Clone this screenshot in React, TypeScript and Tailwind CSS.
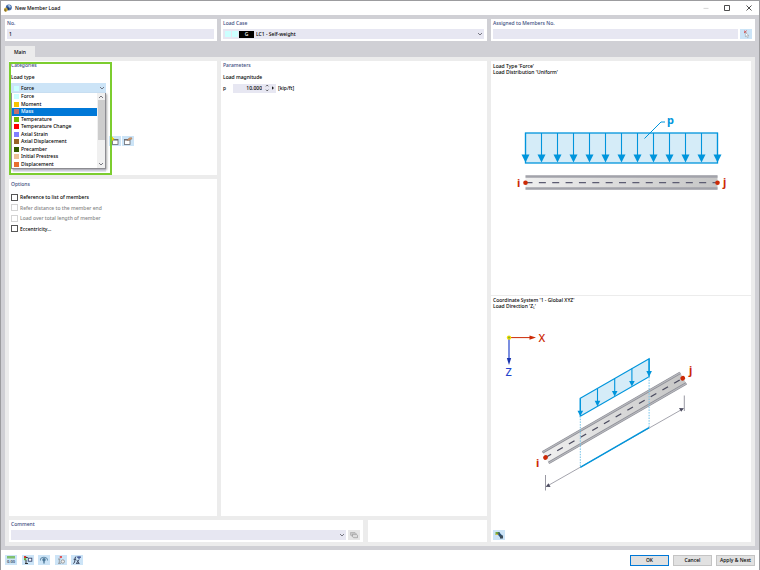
import { useState, type ReactNode } from 'react';

const LOAD_TYPES = [
  { name: 'Force', swatch: 'bg-[#ccffff]' },
  { name: 'Moment', swatch: 'bg-[#f8c300]' },
  { name: 'Mass', swatch: 'bg-[#c07070]' },
  { name: 'Temperature', swatch: 'bg-[#73b900]' },
  { name: 'Temperature Change', swatch: 'bg-[#ff0000]' },
  { name: 'Axial Strain', swatch: 'bg-[#8080ff]' },
  { name: 'Axial Displacement', swatch: 'bg-[#996528]' },
  { name: 'Precamber', swatch: 'bg-[#335a00]' },
  { name: 'Initial Prestress', swatch: 'bg-[#ecc199]' },
  { name: 'Displacement', swatch: 'bg-[#e87030]' },
];

const OPTIONS = [
  { id: 'ref-list', label: 'Reference to list of members', disabled: false },
  { id: 'ref-end', label: 'Refer distance to the member end', disabled: true },
  { id: 'total-length', label: 'Load over total length of member', disabled: true },
  { id: 'eccentricity', label: 'Eccentricity...', disabled: false },
];

const BLUE = '#0095dc';
const RED = '#cc2a06';

function Chevron({ up = false }: { up?: boolean }) {
  return (
    <svg viewBox="0 0 6 4" className="pointer-events-none h-1 w-1.5 shrink-0" fill="none" stroke="#5c5c66" strokeWidth="0.8">
      <path d={up ? 'M1 3 3 1l2 2' : 'M1 1l2 2 2-2'} />
    </svg>
  );
}

function Card({ title, htmlFor, className = '', children }: {
  title?: string;
  htmlFor?: string;
  className?: string;
  children?: ReactNode;
}) {
  return (
    <section className={`bg-white pr-[3px] pl-[2px] ${className}`}>
      {title && htmlFor ? (
        <label htmlFor={htmlFor} className="block h-2 leading-[8px] text-[#3c4c80]">{title}</label>
      ) : null}
      {title && !htmlFor ? <h2 className="h-2 leading-[8px] text-[#3c4c80]">{title}</h2> : null}
      {children}
    </section>
  );
}

function ToolButton({ label, className = 'bg-[#cce4f7]', children }: {
  label: string;
  className?: string;
  children: ReactNode;
}) {
  return (
    <button type="button" aria-label={label} className={`flex h-[10px] w-3 shrink-0 items-center justify-center ${className}`}>
      <svg viewBox="0 0 12 10" className="h-[10px] w-3" fill="none">{children}</svg>
    </button>
  );
}

function TitleBar() {
  return (
    <header className="flex h-[14px] shrink-0 items-center bg-white pl-[3px]">
      <svg viewBox="0 0 8 8" className="mr-[3px] h-2 w-2">
        <circle cx="4.8" cy="3.4" r="3" fill="#3e68a8" />
        <path d="M3.5 1.2 6 1l1.2 2.2-1.8.6z" fill="#a9c3e2" />
        <path d="M3 3.2 5.2 4 5 6 3.4 5.4z" fill="#1c355f" />
        <path d="M.3 4.6 2 3.6l1.6 1.2v2L2 7.8.3 6.9z" fill="#c9a636" />
        <path d="M.3 4.6 2 5.4v2.4L.3 6.9z" fill="#8a742a" />
      </svg>
      <h1 className="flex-1 leading-[8px]">New Member Load</h1>
      <button type="button" aria-label="Minimize" className="flex h-3 w-[21px] items-center justify-center">
        <svg viewBox="0 0 6 6" className="h-1.5 w-1.5" stroke="#c4c4c4" strokeWidth="0.7"><path d="M.5 3.4h5" /></svg>
      </button>
      <button type="button" aria-label="Maximize" className="flex h-3 w-[22px] items-center justify-center">
        <svg viewBox="0 0 6 6" className="h-1.5 w-1.5" fill="none" stroke="#222" strokeWidth="0.8"><rect x=".6" y=".6" width="4.8" height="4.8" /></svg>
      </button>
      <button type="button" aria-label="Close" className="flex h-3 w-[21px] items-center justify-center">
        <svg viewBox="0 0 6 6" className="h-1.5 w-1.5" stroke="#222" strokeWidth="0.8"><path d="M.5.5l5 5M5.5.5l-5 5" /></svg>
      </button>
    </header>
  );
}

function HeaderRow() {
  return (
    <div className="grid grid-cols-[212fr_266fr_264fr] gap-1">
      <Card title="No." htmlFor="load-no" className="h-[22px]">
        <input id="load-no" defaultValue="1" className="mt-[2px] block h-[10px] w-full bg-[#e7e7f2] px-[2px]" />
      </Card>
      <Card title="Load Case" htmlFor="load-case" className="h-[22px]">
        <div className="mt-[2px] flex h-[10px] items-center bg-[#e7e7f2] pr-px pl-[2px]">
          <span className="h-1.5 w-1.5 bg-[#ccffff]" />
          <span className="ml-px h-1.5 w-1.5 bg-[#ccffff]" />
          <span className="ml-px h-[7px] w-[15px] bg-black text-center leading-[7px] text-white">G</span>
          <select id="load-case" className="ml-[2px] h-full min-w-0 flex-1 appearance-none leading-[10px]">
            <option>LC1 - Self-weight</option>
          </select>
          <Chevron />
        </div>
      </Card>
      <Card title="Assigned to Members No." htmlFor="members" className="h-[22px]">
        <div className="mt-[2px] flex gap-[2px]">
          <input id="members" className="block h-[10px] min-w-0 flex-1 bg-[#e7e7f2] px-[2px]" />
          <ToolButton label="Select members">
            <path d="M4 1.7l2.600 2.400M6.600 1.700 4 4.100" stroke="#d65050" strokeWidth="1" />
            <path d="M5.400 3.400v4.400l1.200-1 .8 1.900.9-.4-.8-1.800h1.300z" fill="#fff" stroke="#8d9299" strokeWidth="0.5" />
          </ToolButton>
        </div>
      </Card>
    </div>
  );
}

function LoadTypeList({ selected, onSelect }: { selected: string; onSelect: (name: string) => void }) {
  return (
    <div className="absolute inset-x-0 top-full z-10 flex h-[76px] border border-t-0 border-[#8d8d92] bg-white shadow-[1px_1px_2px_#0005]">
      <ul role="listbox" aria-label="Load types" className="grid flex-1 auto-rows-fr">
        {LOAD_TYPES.map((type) => (
          <li
            key={type.name}
            role="option"
            aria-selected={type.name === selected}
            onClick={() => onSelect(type.name)}
            className={`flex items-center pl-[2px] leading-[7px] ${type.name === selected ? 'bg-[#0078d7] text-white' : ''}`}
          >
            <span className={`mr-[2px] h-[5px] w-[5px] ${type.swatch}`} />
            {type.name}
          </li>
        ))}
      </ul>
      <div className="flex w-2 flex-col items-center justify-between bg-[#f0f0f0] py-[2px]">
        <Chevron up />
        <div className="mt-px h-10 w-[7px] bg-[#cdcdcd]" />
        <div className="flex-1" />
        <Chevron />
      </div>
    </div>
  );
}

function Categories() {
  const [highlighted, setHighlighted] = useState('Mass');

  return (
    <Card title="Categories" className="relative h-[114px]">
      <label htmlFor="load-type" className="mt-1 block leading-[8px]">Load type</label>
      <div className="relative mt-[2px] flex h-[10px] w-[95px] items-center bg-[#cce4f7] pr-px pl-[3px]">
        <span className="h-[5px] w-[5px] bg-[#ccffff]" />
        <select id="load-type" className="ml-[2px] h-full min-w-0 flex-1 appearance-none leading-[10px]">
          <option>Force</option>
        </select>
        <Chevron />
        <LoadTypeList selected={highlighted} onSelect={setHighlighted} />
      </div>
      <div className="mt-[43px] ml-[98px] flex gap-px">
        <ToolButton label="New load distribution">
          <rect x="3.5" y="3.5" width="5.5" height="5" fill="#fff" stroke="#67686e" strokeWidth="0.8" />
          <path d="M3.5 3.9H9" stroke="#67686e" strokeWidth="1.2" />
          <path d="M3.2.8v4M1.2 2.8h4" stroke="#f2d500" strokeWidth="1.5" />
        </ToolButton>
        <ToolButton label="Edit load distribution">
          <rect x="2.5" y="3.5" width="5.5" height="5" fill="#fff" stroke="#67686e" strokeWidth="0.8" />
          <path d="M2.5 3.9H8" stroke="#67686e" strokeWidth="1.2" />
          <path d="M5 4.5 7 2l2.5-.4.4 1.5L7.5 4z" fill="#d99a6c" stroke="#8c644a" strokeWidth="0.4" />
        </ToolButton>
      </div>
      <div className="mt-[16px] ml-[2px] h-[10px] w-[93px] bg-[#e7e7f2]" />
      <div className="pointer-events-none absolute top-px bottom-0 left-0 z-20 w-[103px] border-2 border-[#7ccd2f]" />
    </Card>
  );
}

function Options() {
  return (
    <Card title="Options" className="flex-1 pt-px">
      <div className="mt-1 flex flex-col">
        {OPTIONS.map((option) => (
          <div key={option.id} className="flex h-[10px] items-center gap-[2px] even:h-[11px]">
            <input
              id={option.id}
              type="checkbox"
              disabled={option.disabled}
              className="h-[7px] w-[7px] appearance-none border border-[#555] bg-white checked:bg-[#0078d7] disabled:border-[#d4d4d4]"
            />
            <label htmlFor={option.id} className={option.disabled ? 'text-[#858585]' : ''}>{option.label}</label>
          </div>
        ))}
      </div>
    </Card>
  );
}

function Parameters() {
  return (
    <Card title="Parameters">
      <h3 className="mt-1 leading-[8px]">Load magnitude</h3>
      <div className="mt-[2px] flex h-[10px] items-center">
        <label htmlFor="magnitude" className="w-[10px]">p</label>
        <div className="flex h-[9px] w-[43px] items-center bg-[#e7e7f2]">
          <input id="magnitude" defaultValue="10.000" className="h-full w-[29px] min-w-0 bg-transparent text-right" />
          <svg viewBox="0 0 14 8" className="h-2 w-[14px]" fill="none" stroke="#333" strokeWidth="0.8">
            <path d="M4 2.3 5.2 1.1 6.4 2.3M4 5.7l1.2 1.2L6.4 5.7" />
            <path d="M10 2.2 12 4l-2 1.8z" fill="#222" stroke="none" />
          </svg>
        </div>
        <span className="ml-[2px]">[kip/ft]</span>
      </div>
    </Card>
  );
}

function DownArrow({ x, top, bottom, size = 4 }: { x: number; top: number; bottom: number; size?: number }) {
  return (
    <g>
      <path d={`M${x} ${top}V${bottom - size}`} stroke={BLUE} strokeWidth="1.1" />
      <path d={`M${x - size} ${bottom - size * 2}h${size * 2}L${x} ${bottom}z`} fill={BLUE} />
    </g>
  );
}

function UniformLoadDiagram() {
  const arrows = Array.from({ length: 13 }, (_, i) => 34.5 + i * 16);

  return (
    <svg viewBox="0 0 260 218" className="block w-full" role="img" aria-label="Uniform load on a member">
      <defs>
        <linearGradient id="beam" x1="0" x2="1">
          <stop offset="0" stopColor="#efefef" />
          <stop offset="1" stopColor="#c6c6c6" />
        </linearGradient>
      </defs>
      <rect x="34.5" y="56" width="192" height="30" fill="#d5ecf8" stroke={BLUE} strokeWidth="1.3" />
      {arrows.map((x) => <DownArrow key={x} x={x} top={56} bottom={85.5} />)}
      <path d="M153.5 61.5 170 45h4" fill="none" stroke={BLUE} />
      <text x="176" y="47" fontSize="11" fontWeight="700" fill={BLUE}>p</text>
      <rect x="34.5" y="98.5" width="192" height="14" fill="url(#beam)" />
      <path d="M34.5 99.5h192M34.5 111.5h192" stroke="#a2a3aa" strokeWidth="2.4" />
      <path d="M34.5 105.7h192" stroke="#5c5c72" strokeWidth="1.3" strokeDasharray="7 6.36" />
      <circle cx="34.5" cy="105.7" r="2.3" fill={RED} />
      <circle cx="226.5" cy="105.7" r="2.3" fill={RED} />
      <text x="26" y="110" fontSize="11" fontWeight="700" fill={RED}>i</text>
      <text x="232" y="109" fontSize="11" fontWeight="700" fill={RED}>j</text>
    </svg>
  );
}

function DirectionDiagram() {
  const arrows = Array.from({ length: 5 }, (_, i) => ({ x: 89.3 + i * 17.2, y: 86.3 - i * 9.9 }));

  return (
    <svg viewBox="0 0 260 216" className="block w-full" role="img" aria-label="Load direction in global axes">
      {/* global axes */}
      <path d="M18 25.600h22" stroke={RED} />
      <path d="M38.5 23.400 45 25.600l-6.500 2.200z" fill={RED} />
      <path d="M18 26v22" stroke="#2344cc" strokeWidth="1.2" />
      <path d="M15.800 46h4.400L18 53z" fill="#1a35b0" />
      <circle cx="18" cy="25.600" r="2.2" fill="#f5dc00" />
      <circle cx="18" cy="25.600" r="1" fill="#7bb52a" />
      <text x="47.5" y="30" fontSize="11" fill={RED}>X</text>
      <text x="14.5" y="64" fontSize="11" fill="#2344cc">Z</text>

      {/* inclined beam */}
      <g transform="translate(54.500 145.500) rotate(-30)">
        <rect x="0" y="-6.500" width="159" height="13" fill="url(#beam)" />
        <path d="M0-6h159M0 6.300h159" stroke="#8f9098" strokeWidth="2.6" />
        <path d="M0-6h159M0 6.300h159" stroke="#b9babf" strokeWidth="1" />
        <path d="M0 0h159" stroke="#4c4c60" strokeWidth="1.4" strokeDasharray="6.5 7" />
        <circle cx="0" cy="0" r="2.4" fill={RED} />
        <circle cx="158.500" cy="0" r="2.4" fill={RED} />
      </g>
      <text x="45" y="155" fontSize="11" fontWeight="700" fill={RED}>i</text>
      <text x="198" y="62" fontSize="11" fontWeight="700" fill={RED}>j</text>

      {/* load block with its projection */}
      <path d="M89.300 86.300 158.100 46.700v18L89.300 104.300z" fill="#d5ecf8" stroke={BLUE} strokeWidth="1.2" />
      {arrows.map((a) => <DownArrow key={a.x} x={a.x} top={a.y} bottom={a.y + 18} size={2.8} />)}
      <path d="M89.300 104v51M158.100 65v50.500" stroke="#72c1e8" strokeDasharray="1.5 1.2" />
      <path d="M54.500 175 192.500 96.500" stroke="#8d8d98" strokeWidth="0.8" />
      <path d="M54.500 163v15.500M193.300 83.500v15.500" stroke="#8d8d98" strokeWidth="0.9" />
      <path d="M54.800 174.800l2.600-3.500 2.200 3.700zM192.800 96.300l-2.600 3.500-2.200-3.700z" fill="#4c4c60" />
      <path d="M89.300 155.300 158.100 115.700" stroke={BLUE} strokeWidth="1.5" />
    </svg>
  );
}

function Preview() {
  return (
    <section className="flex flex-col bg-white">
      <div className="border-b border-[#ececec]">
        <p className="h-4 pt-[2px] pl-[2px] leading-[6px]">Load Type 'Force'<br />Load Distribution 'Uniform'</p>
        <UniformLoadDiagram />
      </div>
      <p className="h-4 pt-px pl-[2px] leading-[6px]">
        Coordinate System '1 - Global XYZ'<br />Load Direction 'Z<sub className="text-[3px] leading-none">L</sub>'
      </p>
      <DirectionDiagram />
      <div className="mt-auto pb-[2px] pl-[2px]">
        <ToolButton label="Change view">
          <path d="M2.500 2h4.200v3H2.500z" fill="#72ad3c" />
          <path d="M4 3.500 6 2l4 4.500-2 2z" fill="#26517a" />
          <path d="M7 5.500h3v3H7z" fill="#3f4c58" />
          <path d="M3 4.500 5.500 4" stroke="#e9c73a" />
        </ToolButton>
      </div>
    </section>
  );
}

function CommentRow() {
  return (
    <div className="grid h-[22px] grid-cols-[354fr_119fr] gap-[5px]">
      <Card title="Comment" htmlFor="comment">
        <div className="mt-[2px] flex gap-[2px]">
          <div className="flex h-[10px] flex-1 items-center bg-[#e7e7f2] pr-px">
            <select id="comment" className="h-full min-w-0 flex-1 appearance-none leading-[10px]">
              <option />
            </select>
            <Chevron />
          </div>
          <ToolButton label="Comment library" className="bg-[#e6e6e6]">
            <path d="M2.500 2.500h4.500l1 1v2.500H3.500l-1-1z" fill="#c9c9c9" stroke="#a4a4a4" strokeWidth="0.6" />
            <path d="M4.500 4.300h4l1 1v2.400H5.500l-1-1z" fill="#ddd" stroke="#8f8f8f" strokeWidth="0.6" />
          </ToolButton>
        </div>
      </Card>
      <Card />
    </div>
  );
}

function Footer() {
  const button = 'h-[11px] w-[39px] bg-[#e1e1e1] leading-[9px] border';

  return (
    <footer className="flex h-5 shrink-0 items-center justify-between bg-white px-1">
      <div className="flex w-[78px] justify-between">
        <ToolButton label="Units and decimal places">
          <rect x="2" y="1" width="8" height="2.5" fill="#7fc070" />
          <text x="2" y="8.300" fontSize="4" fontWeight="600" fill="#33475c">0.00</text>
        </ToolButton>
        <ToolButton label="Display properties">
          <rect x="2" y="1" width="2.2" height="2.2" fill="#d93a2b" />
          <rect x="2" y="3.200" width="2.2" height="2" fill="#58b030" />
          <path d="M3.800 2.500h2M4 5v3.500M3 8.500h3" stroke="#222" strokeWidth="0.9" />
          <rect x="6.300" y="3.200" width="3.500" height="3" fill="#fff" stroke="#35446d" strokeWidth="0.9" />
        </ToolButton>
        <ToolButton label="Visibility">
          <path d="M2.500 5.500C1.500 1.200 10 1.200 9.500 5.500" stroke="#6790ae" strokeWidth="1.1" />
          <circle cx="6" cy="4.700" r="1.700" fill="#4c7898" />
          <path d="M6 5v3.500" stroke="#4c7898" strokeWidth="1.3" />
        </ToolButton>
        <ToolButton label="Delete load">
          <path d="M4.800 1l2 2M6.800 1l-2 2" stroke="#e03838" strokeWidth="1" />
          <path d="M3 4h2.500M3 8.300h3M4.300 4v4.300" stroke="#8a8a8a" strokeWidth="0.8" />
          <circle cx="7.800" cy="6.500" r="1.700" fill="#eee" stroke="#8a8a8a" strokeWidth="0.8" />
        </ToolButton>
        <ToolButton label="Formula editor">
          <path d="M5.300 1.700C3.800 1.500 4.200 4 3.800 6 3.500 8 3 8.500 2 8.300M2.600 4.300h2.600" stroke="#2b3550" strokeWidth="0.9" />
          <path d="M5.500 8.300 8 4.700M5.800 5l2.200 3.300M5 8.400h3.500" stroke="#2b3550" strokeWidth="0.8" />
          <path d="M6 2.200h4M8 1.300v3" stroke="#3a4f8f" strokeWidth="1.2" />
        </ToolButton>
      </div>
      <div className="flex gap-1">
        <button type="button" className={`${button} border-[#0078d7]`}>OK</button>
        <button type="button" className={`${button} border-[#c4c4c4]`}>Cancel</button>
        <button type="button" className={`${button} border-[#c4c4c4] whitespace-nowrap`}>Apply &amp; Next</button>
      </div>
    </footer>
  );
}

export default function App() {
  return (
    <div className="flex min-h-screen flex-col border-x border-t border-[#9c9c9f] bg-white font-['Noto_Sans','Open_Sans',sans-serif] text-[5px] leading-[8px] font-medium text-black">
      <TitleBar />
      <main className="flex flex-1 flex-col bg-[#d0d0d5] p-1">
        <HeaderRow />
        <div role="tablist" className="mt-[5px] flex">
          <button type="button" role="tab" aria-selected="true" className="h-[11px] w-[30px] bg-[#ececec]">Main</button>
        </div>
        <div className="grid flex-1 grid-cols-[478fr_260fr] gap-1 bg-[#ececec] p-1">
          <div className="flex flex-col gap-1">
            <div className="grid flex-1 grid-cols-[208fr_266fr] gap-1">
              <div className="flex flex-col gap-1">
                <Categories />
                <Options />
              </div>
              <Parameters />
            </div>
            <CommentRow />
          </div>
          <Preview />
        </div>
      </main>
      <Footer />
    </div>
  );
}
